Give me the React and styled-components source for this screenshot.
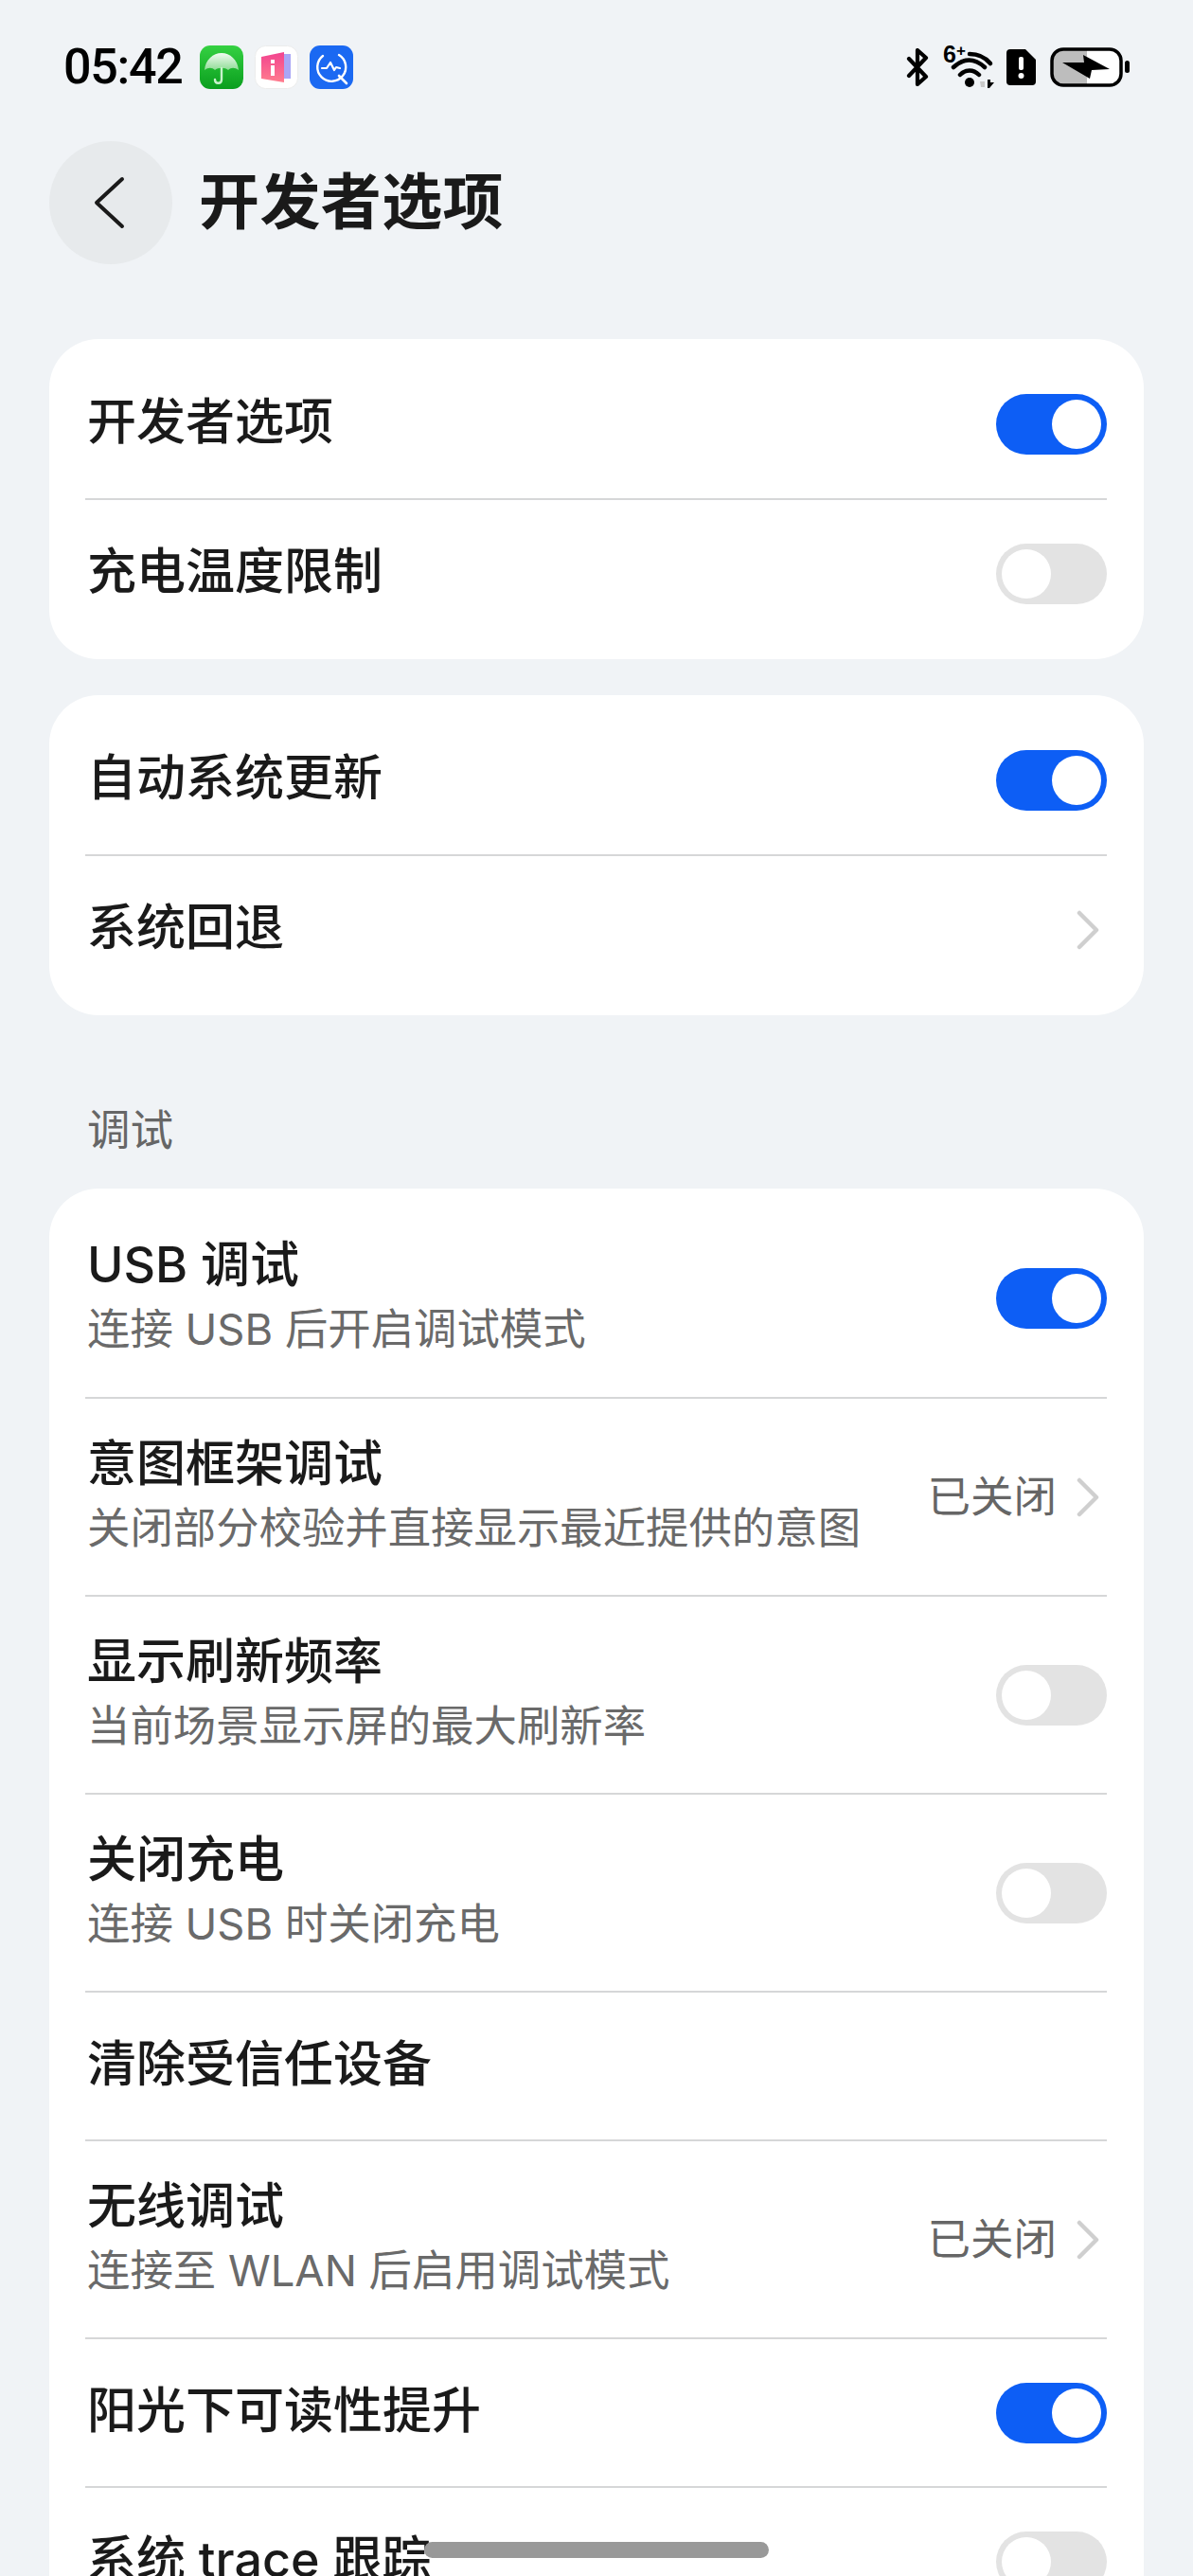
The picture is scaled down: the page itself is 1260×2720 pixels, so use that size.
import React from 'react';
import styled, { createGlobalStyle } from 'styled-components';

const GlobalStyle = createGlobalStyle`
  html, body {
    margin: 0;
    padding: 0;
    background: #f0f3f6;
  }
  * {
    box-sizing: border-box;
  }
`;

const Page = styled.div`
  position: relative;
  width: 1260px;
  height: 2720px;
  overflow: hidden;
  background: #f0f3f6;
  font-family: Inter, "Noto Sans CJK SC", sans-serif;
  color: #1a1a1a;
`;

const StatusBar = styled.div`
  display: flex;
  align-items: center;
  justify-content: space-between;
  height: 142px;
  padding: 0 66px 0 67px;
`;
const StatusLeft = styled.div`
  display: flex;
  align-items: center;
`;
const Clock = styled.span`
  width: 144px;
  font-family: Roboto, "Liberation Sans", sans-serif;
  font-size: 52px;
  font-weight: 500;
  line-height: 1;
  letter-spacing: -1.3px;
  color: #000;
`;
const AppIcons = styled.div`
  display: flex;
  gap: 12px;
`;
const AppIcon = styled.svg`
  display: block;
  width: 46px;
  height: 46px;
`;
const StatusRight = styled.div`
  display: flex;
  align-items: center;
`;
const Bluetooth = styled.svg`
  display: block;
  width: 25px;
  height: 40px;
  margin-right: 14px;
`;
const WifiWrap = styled.div`
  position: relative;
  width: 55px;
  height: 44px;
  margin-right: 12px;
`;
const WifiIcon = styled.svg`
  display: block;
  width: 55px;
  height: 44px;
`;
const WifiBadge = styled.span`
  position: absolute;
  left: 0;
  top: -4px;
  font-family: "Liberation Sans", sans-serif;
  font-size: 25px;
  font-weight: 700;
  line-height: 1;
  color: #000;
`;
const WifiPlus = styled.span`
  font-size: 17px;
  vertical-align: 7px;
`;
const SimIcon = styled.svg`
  display: block;
  width: 31px;
  height: 38px;
  margin-right: 15px;
`;
const BatteryIcon = styled.svg`
  display: block;
  width: 85px;
  height: 42px;
`;

const Header = styled.div`
  display: flex;
  align-items: center;
  height: 136px;
  padding: 0 0 0 52px;
  margin-top: 4px;
`;
const BackButton = styled.div`
  display: flex;
  align-items: center;
  justify-content: center;
  width: 130px;
  height: 130px;
  border-radius: 50%;
  background: #e7eaec;
`;
const BackIcon = styled.svg`
  display: block;
  width: 36px;
  height: 58px;
  margin-left: -5px;
`;
const Title = styled.h1`
  margin: 0 0 2px 28px;
  font-size: 64px;
  font-weight: 700;
  line-height: 1;
  letter-spacing: 0.4px;
  color: #1a1a1a;
`;

const Content = styled.div`
  display: flex;
  flex-direction: column;
  padding: 76px 52px 0;
`;
const Card = styled.div`
  display: flex;
  flex-direction: column;
  padding: 11px 39px 13px 38px;
  margin-bottom: ${({ $gap }) => $gap || 0}px;
  background: #fff;
  border-radius: 52px;
`;
const Row = styled.div`
  display: flex;
  align-items: center;
  justify-content: space-between;
  height: ${({ $tall }) => ($tall ? 209 : 157)}px;
  flex-shrink: 0;
  & + & {
    border-top: 2px solid #d6d7d8;
  }
`;
const RowText = styled.div`
  display: flex;
  flex-direction: column;
  margin-left: 2px;
  padding-bottom: ${({ $tall }) => ($tall ? 2 : 4)}px;
`;
const RowTitle = styled.div`
  font-size: 52px;
  font-weight: 500;
  line-height: 66px;
  color: #1a1a1a;
`;
const RowSub = styled.div`
  margin-top: 2px;
  font-size: 45.4px;
  line-height: 66px;
  color: #6a6a6a;
`;
const RowRight = styled.div`
  display: flex;
  align-items: center;
  flex-shrink: 0;
`;
const RowValue = styled.span`
  margin-right: 21px;
  font-size: 45.5px;
  line-height: 1;
  color: #666;
`;
const Chevron = styled.svg`
  display: block;
  width: 24px;
  height: 42px;
  margin-right: 8px;
`;
const Track = styled.div`
  display: flex;
  justify-content: ${({ $on }) => ($on ? 'flex-end' : 'flex-start')};
  width: 117px;
  height: 64px;
  padding: 6px;
  border-radius: 32px;
  background: ${({ $on }) => ($on ? '#0d5ef5' : '#e3e3e3')};
`;
const Knob = styled.div`
  width: 52px;
  height: 52px;
  border-radius: 50%;
  background: #fff;
`;
const SectionLabel = styled.div`
  padding: 0 0 0 40px;
  margin-bottom: 31px;
  font-size: 45.5px;
  line-height: 60px;
  color: #666;
`;
const HomeBar = styled.div`
  position: absolute;
  left: 448px;
  top: 2684px;
  width: 364px;
  height: 17px;
  border-radius: 9px;
  background: #999;
`;

const Toggle = ({ on }) => (
  <Track $on={on}>
    <Knob />
  </Track>
);

const Arrow = () => (
  <Chevron viewBox="0 0 24 42">
    <path d="M3 3 L21 21 L3 39" fill="none" stroke="#cfcfcf" strokeWidth="4.5" strokeLinecap="round" strokeLinejoin="round" />
  </Chevron>
);

const Item = ({ title, sub, on, value, arrow }) => (
  <Row $tall={!!sub}>
    <RowText $tall={!!sub}>
      <RowTitle>{title}</RowTitle>
      {sub && <RowSub>{sub}</RowSub>}
    </RowText>
    <RowRight>
      {value && <RowValue>{value}</RowValue>}
      {arrow && <Arrow />}
      {on !== undefined && <Toggle on={on} />}
    </RowRight>
  </Row>
);

const debugItems = [
  { title: 'USB 调试', sub: '连接 USB 后开启调试模式', on: true },
  { title: '意图框架调试', sub: '关闭部分校验并直接显示最近提供的意图', value: '已关闭', arrow: true },
  { title: '显示刷新频率', sub: '当前场景显示屏的最大刷新率', on: false },
  { title: '关闭充电', sub: '连接 USB 时关闭充电', on: false },
  { title: '清除受信任设备' },
  { title: '无线调试', sub: '连接至 WLAN 后启用调试模式', value: '已关闭', arrow: true },
  { title: '阳光下可读性提升', on: true },
  { title: '系统 trace 跟踪', on: false },
];

const App = () => (
  <Page>
    <GlobalStyle />
    <StatusBar>
      <StatusLeft>
        <Clock>05:42</Clock>
        <AppIcons>
          <AppIcon viewBox="0 0 46 46">
            <defs>
              <linearGradient id="greenBg" x1="0" y1="0" x2="0" y2="1">
                <stop offset="0" stopColor="#35d142" />
                <stop offset="1" stopColor="#0a9e1e" />
              </linearGradient>
              <linearGradient id="shade" x1="0" y1="0" x2="0" y2="1">
                <stop offset="0" stopColor="#f2fbf2" />
                <stop offset="1" stopColor="#8fdc96" />
              </linearGradient>
            </defs>
            <rect width="46" height="46" rx="11" fill="url(#greenBg)" />
            <path d="M5 26 C6 15 14 8 23 8 C32 8 40 15 41 26 C37 23 33 23 30 26 C27 23 19 23 16 26 C13 23 9 23 5 26 Z" fill="url(#shade)" />
            <path d="M23 24 V36 C23 41 16 41 16 36" fill="none" stroke="#c8f2cc" strokeWidth="2.4" strokeLinecap="round" />
          </AppIcon>
          <AppIcon viewBox="0 0 46 46">
            <defs>
              <linearGradient id="pinkBook" x1="0" y1="0" x2="0" y2="1">
                <stop offset="0" stopColor="#f2438f" />
                <stop offset="1" stopColor="#ff7d8e" />
              </linearGradient>
            </defs>
            <rect x="0.5" y="0.5" width="45" height="45" rx="11" fill="#fff" stroke="#ececec" />
            <path d="M29 9 H38 V35 H29 Z" fill="#a9a6f5" />
            <path d="M7 12 L31 7 V39 L7 35 Z" fill="url(#pinkBook)" />
            <rect x="17" y="15" width="4" height="4" fill="#fff" />
            <rect x="17" y="21" width="4" height="11" fill="#fff" />
          </AppIcon>
          <AppIcon viewBox="0 0 46 46">
            <rect width="46" height="46" rx="11" fill="#1b69f2" />
            <path d="M14 11 A15 15 0 1 0 31 10" fill="none" stroke="#fff" strokeWidth="2.4" strokeLinecap="round" />
            <path d="M31 32 L39 40" fill="none" stroke="#fff" strokeWidth="2.6" strokeLinecap="round" />
            <path d="M13 24 L18 24 L22 18 L26 26 L28 23 L32 24" fill="none" stroke="#fff" strokeWidth="2.2" strokeLinecap="round" strokeLinejoin="round" />
          </AppIcon>
        </AppIcons>
      </StatusLeft>
      <StatusRight>
        <Bluetooth viewBox="0 0 25 40">
          <path d="M3 11 L21 30 L12 38 V2 L21 10 L3 29" fill="none" stroke="#000" strokeWidth="4.2" strokeLinecap="round" strokeLinejoin="round" />
        </Bluetooth>
        <WifiWrap>
          <WifiBadge>6<WifiPlus>+</WifiPlus></WifiBadge>
          <WifiIcon viewBox="0 0 55 44">
            <path d="M28 8 C37 8 45 12 50 18" fill="none" stroke="#000" strokeWidth="4.5" strokeLinecap="round" />
            <path d="M11 22 C22 12 33 12 44 22" fill="none" stroke="#000" strokeWidth="4.5" strokeLinecap="round" />
            <path d="M18 30 C24 24 32 24 38 30" fill="none" stroke="#000" strokeWidth="4.5" strokeLinecap="round" />
            <circle cx="28" cy="38" r="5" fill="#000" />
            <path d="M39 37 L44 37 L44 43 L40 43 Z" fill="#c9c9c9" />
            <path d="M47 35 L50 35 L50 38 L54 38 L49 44 L47 44 Z" fill="#000" />
          </WifiIcon>
        </WifiWrap>
        <SimIcon viewBox="0 0 31 38">
          <path d="M4 0 H20 L31 11 V34 A4 4 0 0 1 27 38 H4 A4 4 0 0 1 0 34 V4 A4 4 0 0 1 4 0 Z" fill="#000" />
          <rect x="13" y="8" width="5" height="14" rx="2" fill="#fff" />
          <circle cx="15.5" cy="28" r="3" fill="#fff" />
        </SimIcon>
        <BatteryIcon viewBox="0 0 85 42">
          <rect x="2" y="2" width="73" height="38" rx="12" fill="#fff" />
          <path d="M14 2 H39 V40 H14 A12 12 0 0 1 2 28 V14 A12 12 0 0 1 14 2 Z" fill="#bdbdbd" />
          <rect x="2" y="2" width="73" height="38" rx="12" fill="none" stroke="#000" strokeWidth="3.5" />
          <path d="M35 8 L63 23 L44 24 L42 33 L13 16 L36 16 Z" fill="#000" />
          <rect x="79" y="14" width="5" height="13" rx="2.5" fill="#000" />
        </BatteryIcon>
      </StatusRight>
    </StatusBar>

    <Header>
      <BackButton>
        <BackIcon viewBox="0 0 36 58">
          <path d="M32 4 L5 29 L32 54" fill="none" stroke="#1a1a1a" strokeWidth="4" strokeLinecap="round" strokeLinejoin="round" />
        </BackIcon>
      </BackButton>
      <Title>开发者选项</Title>
    </Header>

    <Content>
      <Card $gap={38}>
        <Item title="开发者选项" on />
        <Item title="充电温度限制" on={false} />
      </Card>
      <Card $gap={92}>
        <Item title="自动系统更新" on />
        <Item title="系统回退" arrow />
      </Card>
      <SectionLabel>调试</SectionLabel>
      <Card>
        {debugItems.map((item) => (
          <Item key={item.title} {...item} />
        ))}
      </Card>
    </Content>
    <HomeBar />
  </Page>
);

export default App;
